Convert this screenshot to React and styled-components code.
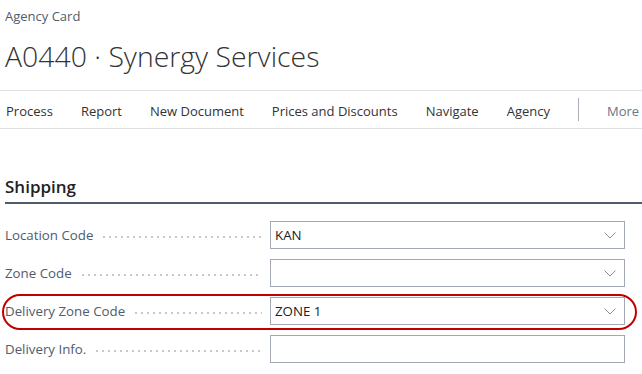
import React from "react";
import styled, { createGlobalStyle } from "styled-components";

const Global = createGlobalStyle`
  html, body { margin: 0; padding: 0; background: #fff; }
  body { font-family: "Open Sans", "Noto Sans", sans-serif; color: #505c6d; }
`;

const Page = styled.div`
  width: 642px;
  height: 374px;
  overflow: hidden;
  display: flex;
  flex-direction: column;
`;

const Caption = styled.div`
  padding: 7px 0 0 5px;
  font-size: 13px;
  line-height: 18px;
  color: #505c6d;
`;

const Title = styled.h1`
  margin: 0;
  padding: 12px 0 0 5px;
  font-size: 28.4px;
  font-weight: 300;
  line-height: 38px;
  color: #333;
  white-space: nowrap;
`;

const ActionBar = styled.nav`
  margin-top: 15px;
  box-sizing: content-box;
  border-top: 1px solid #dcdfe3;
  border-bottom: 1px solid #dcdfe3;
  display: flex;
  align-items: center;
  gap: 28px;
  padding: 2px 0 0 6px;
  height: 35px;
  white-space: nowrap;
`;

const Action = styled.span`
  font-size: 13px;
  color: ${(p) => (p.$muted ? "#6a7585" : "#333")};
`;

const Divider = styled.span`
  width: 1px;
  height: 23px;
  margin-top: -2px;
  background: #a8aeb7;
`;

const Section = styled.section`
  margin-top: 47px;
  padding-left: 5px;
`;

const SectionTitle = styled.h2`
  margin: 0;
  font-size: 17px;
  font-weight: 600;
  line-height: 22px;
  color: #222;
  padding-bottom: 4px;
  border-bottom: 2px solid #505c6d;
`;

const Fields = styled.div`
  margin-top: 17px;
  display: flex;
  flex-direction: column;
  gap: 10px;
`;

const Row = styled.div`
  position: relative;
  display: flex;
  align-items: center;
  height: 28px;
`;

const Label = styled.div`
  width: 265px;
  flex: none;
  display: flex;
  align-items: center;
  font-size: 13.3px;
  color: #505c6d;
  white-space: nowrap;
`;

const Leader = styled.span`
  flex: 1;
  height: 2px;
  margin: 3px 8px 0 8px;
  background-image: radial-gradient(circle, #c5c9cf 0.8px, transparent 1px);
  background-size: 6px 2px;
  background-repeat: repeat-x;
`;

const Input = styled.div`
  box-sizing: border-box;
  width: 355px;
  height: 28px;
  border: 1px solid #a2a9b3;
  display: flex;
  align-items: center;
  justify-content: space-between;
  padding: 0 8px 0 4px;
  font-size: 13.3px;
  color: #212121;
`;

const Highlight = styled.div`
  position: absolute;
  left: -3px;
  top: -3px;
  width: 635px;
  height: 36px;
  box-sizing: border-box;
  border: 2.8px solid #c00000;
  border-radius: 18px;
  pointer-events: none;
`;

const Chevron = () => (
  <svg width="12" height="7" viewBox="0 0 12 7">
    <path d="M0.5 0.5 L6 6 L11.5 0.5" fill="none" stroke="#8a919b" strokeWidth="1" />
  </svg>
);

const fields = [
  { label: "Location Code", value: "KAN", lookup: true },
  { label: "Zone Code", value: "", lookup: true },
  { label: "Delivery Zone Code", value: "ZONE 1", lookup: true, highlight: true },
  { label: "Delivery Info.", value: "", lookup: false },
];

export default function App() {
  return (
    <Page>
      <Global />
      <Caption>Agency Card</Caption>
      <Title>A0440 · Synergy Services</Title>
      <ActionBar>
        <Action>Process</Action>
        <Action>Report</Action>
        <Action>New Document</Action>
        <Action>Prices and Discounts</Action>
        <Action>Navigate</Action>
        <Action>Agency</Action>
        <Divider />
        <Action $muted>More</Action>
      </ActionBar>
      <Section>
        <SectionTitle>Shipping</SectionTitle>
        <Fields>
          {fields.map((f) => (
            <Row key={f.label}>
              <Label>
                {f.label}
                <Leader />
              </Label>
              <Input>
                <span>{f.value}</span>
                {f.lookup && <Chevron />}
              </Input>
              {f.highlight && <Highlight />}
            </Row>
          ))}
        </Fields>
      </Section>
    </Page>
  );
}
